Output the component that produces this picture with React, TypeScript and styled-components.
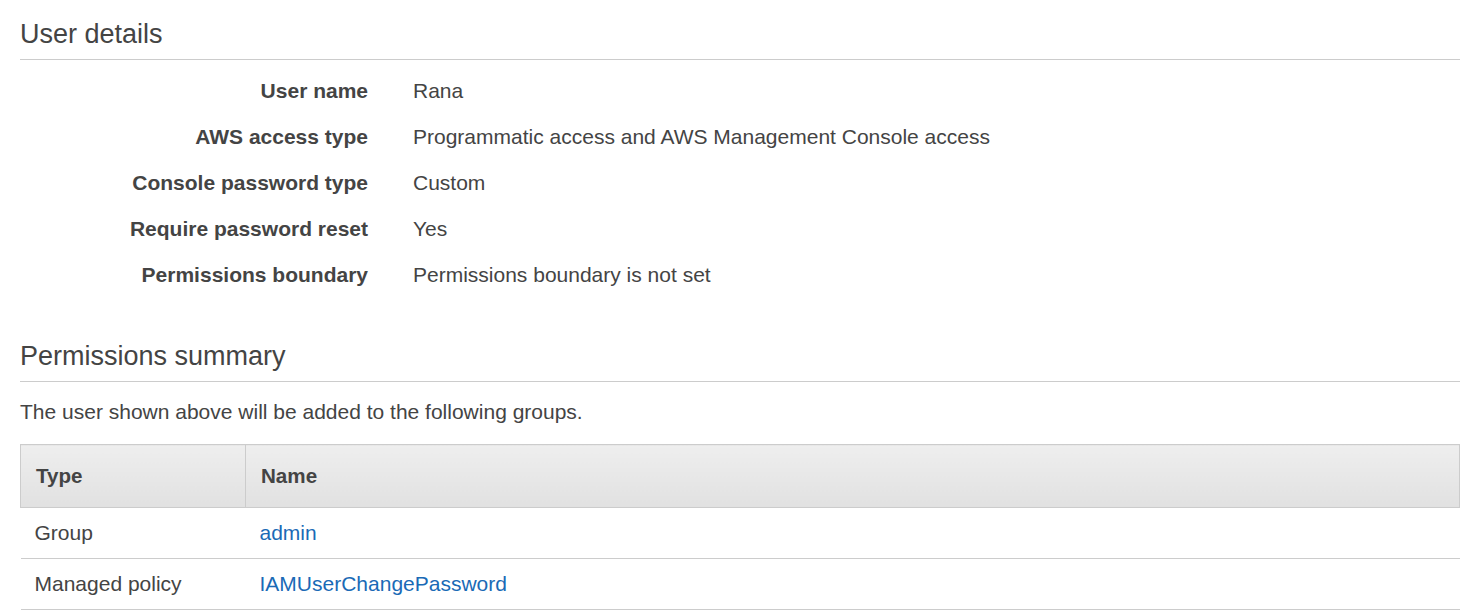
import React from 'react';
import styled, {createGlobalStyle} from 'styled-components';

const GlobalStyle = createGlobalStyle`
  html, body {
    margin: 0;
    padding: 0;
    background: #fff;
  }
  body {
    font-family: "Liberation Sans", Arial, Helvetica, sans-serif;
    color: #444;
  }
`;

interface IDetail {
  label: string;
  value: string;
}

interface IPermission {
  type: string;
  name: string;
}

const DETAILS: IDetail[] = [
  {label: 'User name', value: 'Rana'},
  {
    label: 'AWS access type',
    value: 'Programmatic access and AWS Management Console access'
  },
  {label: 'Console password type', value: 'Custom'},
  {label: 'Require password reset', value: 'Yes'},
  {label: 'Permissions boundary', value: 'Permissions boundary is not set'}
];

const PERMISSIONS: IPermission[] = [
  {type: 'Group', name: 'admin'},
  {type: 'Managed policy', name: 'IAMUserChangePassword'}
];

const Page = styled.div`
  padding: 18px 3px 0 20px;
`;

const SectionTitle = styled.h2<{$spaced?: boolean}>`
  margin: ${(p) => (p.$spaced ? '42px' : '0')} 0 0;
  padding-bottom: 9px;
  border-bottom: 1px solid #cccccc;
  font-size: 27px;
  line-height: 32px;
  font-weight: normal;
  color: #444;
`;

const DetailList = styled.dl`
  margin: 8px 0 0;
  display: grid;
  grid-template-columns: 348px 1fr;
  column-gap: 45px;
`;

const DetailLabel = styled.dt`
  margin: 0;
  text-align: right;
  font-size: 21px;
  line-height: 46px;
  font-weight: bold;
  color: #444;
`;

const DetailValue = styled.dd`
  margin: 0;
  font-size: 21px;
  line-height: 46px;
  color: #444;
`;

const Intro = styled.p`
  margin: 15px 0 0;
  font-size: 21px;
  line-height: 30px;
  color: #444;
`;

const Table = styled.table`
  margin-top: 17px;
  width: 100%;
  border-collapse: collapse;
  font-size: 21px;
`;

const HeadCell = styled.th<{$width?: number}>`
  width: ${(p) => (p.$width ? `${p.$width}px` : 'auto')};
  height: 62px;
  padding: 0 16px 0 15px;
  text-align: left;
  vertical-align: middle;
  font-size: 20.6px;
  font-weight: bold;
  color: #444;
  background: linear-gradient(to bottom, #eeeeee, #e1e1e1);
  border: 1px solid #cccccc;
`;

const Row = styled.tr`
  border-bottom: 1px solid #cccccc;
`;

const Cell = styled.td`
  height: 50px;
  padding: 0 14px;
  vertical-align: middle;
  color: #444;
`;

const PolicyLink = styled.a`
  color: #1a6ab6;
  text-decoration: none;
  cursor: pointer;
`;

const App = () => {
  return (
    <Page>
      <GlobalStyle />
      <SectionTitle>User details</SectionTitle>
      <DetailList>
        {DETAILS.map((item: IDetail) => (
          <React.Fragment key={item.label}>
            <DetailLabel>{item.label}</DetailLabel>
            <DetailValue>{item.value}</DetailValue>
          </React.Fragment>
        ))}
      </DetailList>

      <SectionTitle $spaced>Permissions summary</SectionTitle>
      <Intro>The user shown above will be added to the following groups.</Intro>
      <Table>
        <thead>
          <tr>
            <HeadCell $width={193}>Type</HeadCell>
            <HeadCell>Name</HeadCell>
          </tr>
        </thead>
        <tbody>
          {PERMISSIONS.map((perm: IPermission) => (
            <Row key={perm.name}>
              <Cell>{perm.type}</Cell>
              <Cell>
                <PolicyLink>{perm.name}</PolicyLink>
              </Cell>
            </Row>
          ))}
        </tbody>
      </Table>
    </Page>
  );
};

export default App;
